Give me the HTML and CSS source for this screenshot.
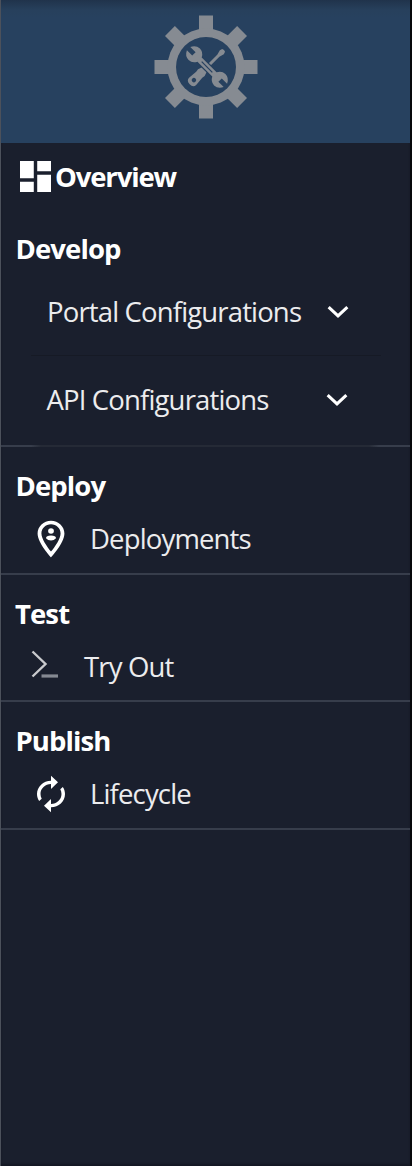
FILE: index.html
```html
<!DOCTYPE html>
<html lang="en">
<head>
<meta charset="utf-8">
<title>Overview</title>
<link rel="stylesheet" href="styles.css">
</head>
<body>
<nav class="sidebar">
  <header class="banner">
    <svg class="gear" viewBox="0 0 104 104">
      <g fill="#868b92">
        <rect x="45" y=".5" width="14" height="103"/>
        <rect x=".5" y="45" width="103" height="14"/>
        <rect x="45" y="1" width="14" height="102" transform="rotate(45 52 52)"/>
        <rect x="45" y="1" width="14" height="102" transform="rotate(-45 52 52)"/>
        <circle cx="52" cy="52" r="38.500"/>
      </g>
      <circle cx="52" cy="52" r="30" fill="#27415f"/>
      <g transform="translate(1 0) rotate(45 52 52)" fill="#868b92">
        <path d="M50 28.500q2-1.200 4 0l.8 2.500-1.300 5v17h-3v-17l-1.300-5z"/>
        <path d="M49.300 54h5.400l2 6-.4 3 .7 9q0 4.500-5 4.500t-5-4.500l.7-9-.4-3z"/>
        <circle cx="52" cy="70.500" r="2.200" fill="#27415f"/>
      </g>
      <g transform="translate(1 0) rotate(-45 52 52)">
        <rect x="47.800" y="42" width="8.400" height="20" fill="#27415f"/>
        <path fill="#868b92" d="M49.600 26v7.500h4.800V26q5.600 2.500 5.600 8 0 5-5 7.500v21q5 2.500 5 7.500 0 5.500-5.600 8v-7.500h-4.800V78q-5.600-2.500-5.600-8 0-5 5-7.500v-21q-5-2.500-5-7.500 0-5.500 5.600-8z"/>
        <path d="M52 44.500v15" stroke="#27415f" stroke-width="1.200"/>
      </g>
    </svg>
  </header>
  <a class="overview">
    <svg class="dashboard" viewBox="3 3 18 18"><path d="M3 13h8V3H3v10zm0 8h8v-6H3v6zm10 0h8V11h-8v10zm0-18v6h8V3h-8z"/></svg>
    <span class="strong">Overview</span>
  </a>
  <section class="group develop">
    <h2 class="strong heading">Develop</h2>
    <div class="panels">
      <div class="panel">
        <span class="label">Portal Configurations</span>
        <svg class="chevron" viewBox="0 0 20 12"><path d="M1.500 1.500 10 9.500l8.500-8"/></svg>
      </div>
      <div class="panel second">
        <span class="label">API Configurations</span>
        <svg class="chevron" viewBox="0 0 20 12"><path d="M1.500 1.500 10 9.500l8.500-8"/></svg>
      </div>
    </div>
  </section>
  <section class="group">
    <h2 class="strong heading">Deploy</h2>
    <div class="item">
      <svg class="icon" viewBox="0 0 24 24" preserveAspectRatio="none"><path d="M12 2C8.140 2 5 5.140 5 9c0 5.250 7 13 7 13s7-7.750 7-13c0-3.860-3.140-7-7-7zM7 9c0-2.760 2.240-5 5-5s5 2.240 5 5c0 2.880-2.880 7.190-5 9.880C9.920 16.210 7 11.850 7 9z"/><circle cx="12" cy="7.700" r="1.500"/><path d="M9.400 11.600q0-1.500 2.600-1.500t2.600 1.500q-1 1.200-2.600 1.200t-2.600-1.200z"/></svg>
      <span class="label deployments">Deployments</span>
    </div>
  </section>
  <section class="group">
    <h2 class="strong heading test">Test</h2>
    <div class="item">
      <svg class="prompt" viewBox="0 0 28 28"><path d="M1.500 1.500 14.500 14 1.500 26.500" stroke="#c9cacd"/><path d="M10.500 26h16.500" stroke="#858992" stroke-width="3.200"/></svg>
      <span class="label tryout">Try Out</span>
    </div>
  </section>
  <section class="group">
    <h2 class="strong heading">Publish</h2>
    <div class="item">
      <svg class="icon renew" viewBox="0 0 24 24" preserveAspectRatio="none"><path d="M12 6v3l4-4-4-4v3c-4.420 0-8 3.580-8 8 0 1.570.46 3.030 1.240 4.260L6.700 14.800c-.45-.83-.7-1.790-.7-2.800 0-3.310 2.690-6 6-6zm6.760 1.740L17.300 9.200c.44.84.7 1.790.7 2.800 0 3.310-2.690 6-6 6v-3l-4 4 4 4v-3c4.420 0 8-3.580 8-8 0-1.570-.46-3.030-1.240-4.260z"/></svg>
      <span class="label lifecycle">Lifecycle</span>
    </div>
  </section>
</nav>
</body>
</html>
```
FILE: styles.css
```css
* { box-sizing: border-box; }
body { margin: 0; background: #1a1f2d; font-family: "Open Sans", "Noto Sans", sans-serif; }
svg { display: block; flex: none; }
.sidebar { width: 412px; height: 1166px; border-left: 1px solid #4c515b; border-right: 2px solid #08090c; background: #1a1f2d; box-shadow: inset 0 -2px 2px #151824; }
.banner { height: 143px; padding: 15px 0 0 153px; background: linear-gradient(#20334b 0, #27405c 10px, #27415f 18px); }
.gear { width: 104px; height: 104px; }
.strong { color: #fff; font-size: 27.500px; line-height: 38px; font-weight: 700; white-space: nowrap; margin: 0; letter-spacing: -1.050px; }
.label { color: #ececee; font-size: 27.500px; line-height: 38px; white-space: nowrap; letter-spacing: -.850px; }
.overview { display: flex; align-items: center; gap: 4px; height: 67px; padding-left: 19px; }
.overview .strong { letter-spacing: -1.150px; }
.dashboard { width: 31px; height: 31px; fill: #fff; }
.group { height: 127.600px; padding-top: 20px; border-bottom: 2px solid #373d4b; }
.develop { height: 237px; border-bottom: 0; background: linear-gradient(90deg, #373d4b 30px, #252a36 40px, #252a36 368px, #373d4b 378px) left bottom / 100% 2px no-repeat; }
.heading { padding-left: 14.500px; letter-spacing: -.900px; }
.test { padding-left: 14px; }
.panels { margin: -1px 29px 0 30px; }
.panel { display: flex; align-items: center; justify-content: space-between; height: 89px; padding: 1px 32px 0 16px; border-bottom: 1px solid #161a25; }
.second { height: 87px; border: 0; padding: 0 33px 0 15.500px; }
.chevron { width: 22px; height: 14px; fill: none; stroke: #fff; stroke-width: 2.800; }
.item { display: flex; align-items: center; height: 52px; margin-top: 8px; }
.icon { width: 46px; height: 44px; margin-left: 27px; fill: #fff; }
.renew { width: 42px; height: 40px; margin-left: 29px; }
.prompt { width: 28px; height: 28px; margin: -5px 0 0 30px; fill: none; stroke-width: 2.400; }
.deployments { margin-left: 16px; }
.lifecycle { margin-left: 18px; }
.tryout { margin-left: 25px; }
```
